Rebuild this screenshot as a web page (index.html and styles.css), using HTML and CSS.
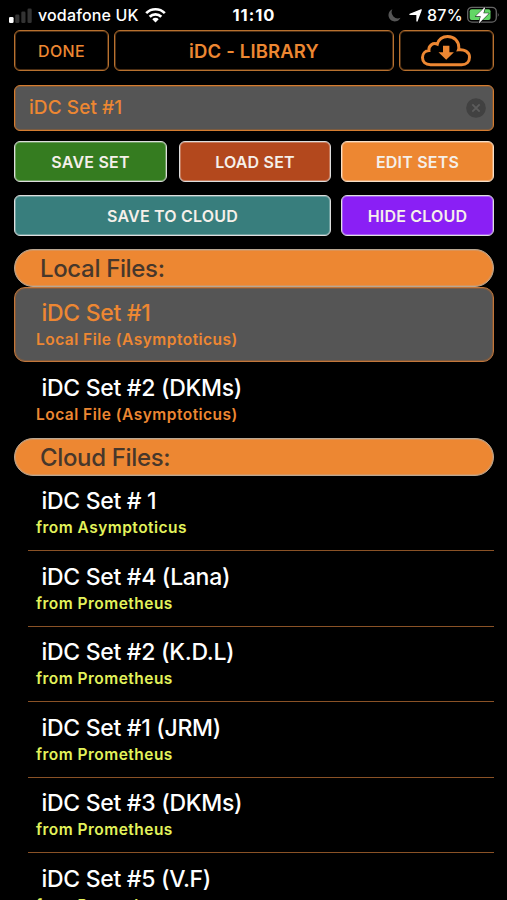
FILE: index.html
```html
<!DOCTYPE html>
<html lang="en">
<head>
<meta charset="utf-8">
<title>iDC - Library</title>
<link rel="stylesheet" href="styles.css">
</head>
<body>
<div class="status">
  <div class="status-left">
    <svg class="signal" width="24" height="15" viewBox="0 0 24 15"><rect x="0" y="9" width="4.6" height="6" rx="1.3" fill="#fff"/><rect x="6.2" y="6.5" width="4.2" height="8.5" rx="1.3" fill="#333"/><rect x="12.3" y="3.5" width="4.2" height="11.5" rx="1.3" fill="#333"/><rect x="18.5" y="0.5" width="4.2" height="14.5" rx="1.3" fill="#333"/></svg>
    <span class="carrier">vodafone UK</span>
    <svg class="wifi" width="21" height="16" viewBox="0 0 21 16" fill="none" stroke="#fff" stroke-width="2.7"><path d="M1.2 6.1a13.2 13.2 0 0 1 18.6 0M4.7 9.7a8.2 8.2 0 0 1 11.6 0"/><path d="M10.5 15.5L7.3 12.2a4.5 4.5 0 0 1 6.4 0Z" fill="#fff" stroke="none"/></svg>
  </div>
  <span class="time">11:10</span>
  <div class="status-right">
    <svg class="moon" width="13" height="13" viewBox="0 0 13 13"><path d="M4.4 0.3A6.3 6.3 0 1 0 12.5 8.8 6.2 6.2 0 0 1 4.4 0.3Z" fill="#555"/></svg>
    <svg class="arrow" width="13" height="13" viewBox="0 0 13 13"><path d="M12.2 0.8L8 12V5.4H1Z" fill="#fff" stroke="#fff" stroke-width="1.3" stroke-linejoin="round"/></svg>
    <span class="percent">87%</span>
    <svg class="battery" width="33" height="18" viewBox="0 0 33 18"><rect x=".7" y="1.3" width="28.6" height="14.8" rx="4.3" fill="none" stroke="#666" stroke-width="1.3"/><path d="M30.8 6.5q1.7 2.2 0 4.4Z" fill="#777"/><rect x="2.7" y="3.3" width="20.8" height="10.8" rx="2" fill="#62d665"/><path d="M18.5 0.5L8.5 10.3h5.2L11.8 17.5 22 7.3h-5.6Z" fill="#fff" stroke="#000" stroke-width="1" paint-order="stroke"/></svg>
  </div>
</div>
<main>
  <header class="top">
    <button class="outline done">DONE</button>
    <div class="outline title">iDC - LIBRARY</div>
    <button class="outline" aria-label="Download from cloud"><svg width="52" height="34" viewBox="0 0 52 34"><path d="M10.5 30.7C5.3 30.7 2.5 27.6 2.5 23.6c0-4 2.7-6.7 6.4-7-.5-5.2 4.3-8.3 8.4-6.5C18.5 5.5 22.6 2.4 27.6 2.4c6.8 0 11.4 5 11.2 11.2.1.9 0 1.4-.3 2.2 5.9-.8 11 2.4 11 7.4 0 4.6-3.1 7.5-7.9 7.5Z" fill="none" stroke="#ed8732" stroke-width="3"/><path d="M23 11.8h6.4v6.5h4.5L26.2 25.8 18.5 18.3H23Z" fill="#ed8732"/></svg></button>
  </header>
  <div class="field"><span>iDC Set #1</span><svg width="20" height="20" viewBox="0 0 20 20"><circle cx="10" cy="10" r="9.8" fill="#414141"/><path d="M6.3 6.3l7.4 7.4M13.7 6.3l-7.4 7.4" stroke="#5c5c5c" stroke-width="1.8"/></svg></div>
  <div class="actions three">
    <button class="btn green">SAVE SET</button>
    <button class="btn rust">LOAD SET</button>
    <button class="btn orange">EDIT SETS</button>
  </div>
  <div class="actions two">
    <button class="btn teal">SAVE TO CLOUD</button>
    <button class="btn purple">HIDE CLOUD</button>
  </div>
  <h2 class="pill">Local Files:</h2>
  <ul class="local">
    <li class="row selected"><b class="name">iDC Set #1</b><span class="sub">Local File (Asymptoticus)</span></li>
    <li class="row"><b class="name">iDC Set #2 (DKMs)</b><span class="sub">Local File (Asymptoticus)</span></li>
  </ul>
  <h2 class="pill">Cloud Files:</h2>
  <ul class="cloud">
    <li class="row"><b class="name">iDC Set # 1</b><span class="sub">from Asymptoticus</span></li>
    <li class="row"><b class="name">iDC Set #4 (Lana)</b><span class="sub">from Prometheus</span></li>
    <li class="row"><b class="name">iDC Set #2 (K.D.L)</b><span class="sub">from Prometheus</span></li>
    <li class="row"><b class="name">iDC Set #1 (JRM)</b><span class="sub">from Prometheus</span></li>
    <li class="row"><b class="name">iDC Set #3 (DKMs)</b><span class="sub">from Prometheus</span></li>
    <li class="row"><b class="name">iDC Set #5 (V.F)</b><span class="sub">from Prometheus</span></li>
  </ul>
</main>
</body>
</html>
```

FILE: styles.css
```css
* { box-sizing: border-box; }
html, body { height: 900px; overflow: hidden; }
body { margin: 0; background: #000; color: #fff; font-family: Inter, "Liberation Sans", sans-serif; }
svg { display: block; flex: none; }
button { font: inherit; padding: 0; background: none; }
ul { list-style: none; margin: 0; padding: 0; }

.status { height: 30px; padding: 0 9px; display: grid; grid-template-columns: 1fr auto 1fr; align-items: center; line-height: 30px; font-size: 16px; }
.status-left, .status-right { display: flex; align-items: center; }
.status-right { justify-content: flex-end; }
.carrier { margin-left: 5px; font-weight: 500; letter-spacing: 0.15px; }
.wifi { margin-left: 6px; }
.time { font-size: 16.5px; font-weight: 700; letter-spacing: 1px; padding-left: 1px; }
.arrow { margin-left: 8px; }
.percent { margin-left: 5px; font-weight: 500; letter-spacing: 0.3px; }
.battery { margin-left: 4px; margin-right: -2px; }

main { padding: 0 13px 0 14px; }
.top { display: grid; grid-template-columns: 95px 1fr 95px; gap: 5px; height: 41px; }
.outline { border: 1px solid #b8712f; box-shadow: inset 0 0 0 1px #4a2d13; border-radius: 6px; color: #ed8732; display: flex; align-items: center; justify-content: center; }
.outline svg { margin-left: -1px; }
.done { font-size: 16px; font-weight: 500; letter-spacing: 0.3px; }
.title { font-size: 18.5px; font-weight: 600; letter-spacing: 0.15px; }

.field { height: 46px; margin-top: 13.5px; padding: 0 7px 0 14px; display: flex; align-items: center; justify-content: space-between; background: #555; border: 1px solid #d47c30; box-shadow: inset 0 0 0 1px #7a5b40; border-radius: 6px; color: #ed8732; font-size: 19px; font-weight: 500; letter-spacing: 0.08px; }

.actions { display: grid; height: 41px; justify-content: space-between; }
.three { grid-template-columns: 153px 152px 153px; margin-top: 10.5px; }
.two { grid-template-columns: 317px 153px; margin-top: 13px; }
.btn { border: 1px solid #ddd; box-shadow: inset 0 0 0 1px rgb(255 255 255 / .28); border-radius: 6px; color: #f5f0ea; font-size: 16px; font-weight: 600; letter-spacing: 0.2px; }
.green { background: #357c20; }
.rust { background: #b3481d; margin: 0 -1px 0 1px; }
.orange { background: #ed8732; border-color: #f6dfc8; }
.teal { background: #387e7d; }
.purple { background: #8a1ff5; }

.pill { height: 38px; margin: 0; padding-left: 25px; line-height: 37px; background: #ed8732; border: 1px solid #b9a793; box-shadow: inset 0 0 0 1px #dc9356; border-radius: 19px; color: #47372b; font-size: 24px; font-weight: 500; letter-spacing: -0.35px; }
.two + .pill { margin-top: 12.5px; }
.local { height: 151px; }
.row { height: 75.5px; padding: 11px 0 0 22px; display: flex; flex-direction: column; }
.name { padding-left: 5.5px; font-size: 23px; line-height: 31px; font-weight: 500; letter-spacing: -0.3px; white-space: nowrap; }
.sub { font-size: 15.5px; line-height: 22px; font-weight: 600; color: #ed8732; letter-spacing: 0.48px; white-space: nowrap; }
.selected { background: #555; border: 1px solid #c2763a; box-shadow: inset 0 0 0 1px #7b5a40; border-radius: 11px; padding: 10px 0 0 21px; }
.selected .name { color: #ed8732; }
.cloud { padding-left: 14px; }
.cloud .row { padding: 10.7px 0 0 8px; border-bottom: 1px solid #8a5226; }
.cloud .sub { color: #e3f35b; }
```
